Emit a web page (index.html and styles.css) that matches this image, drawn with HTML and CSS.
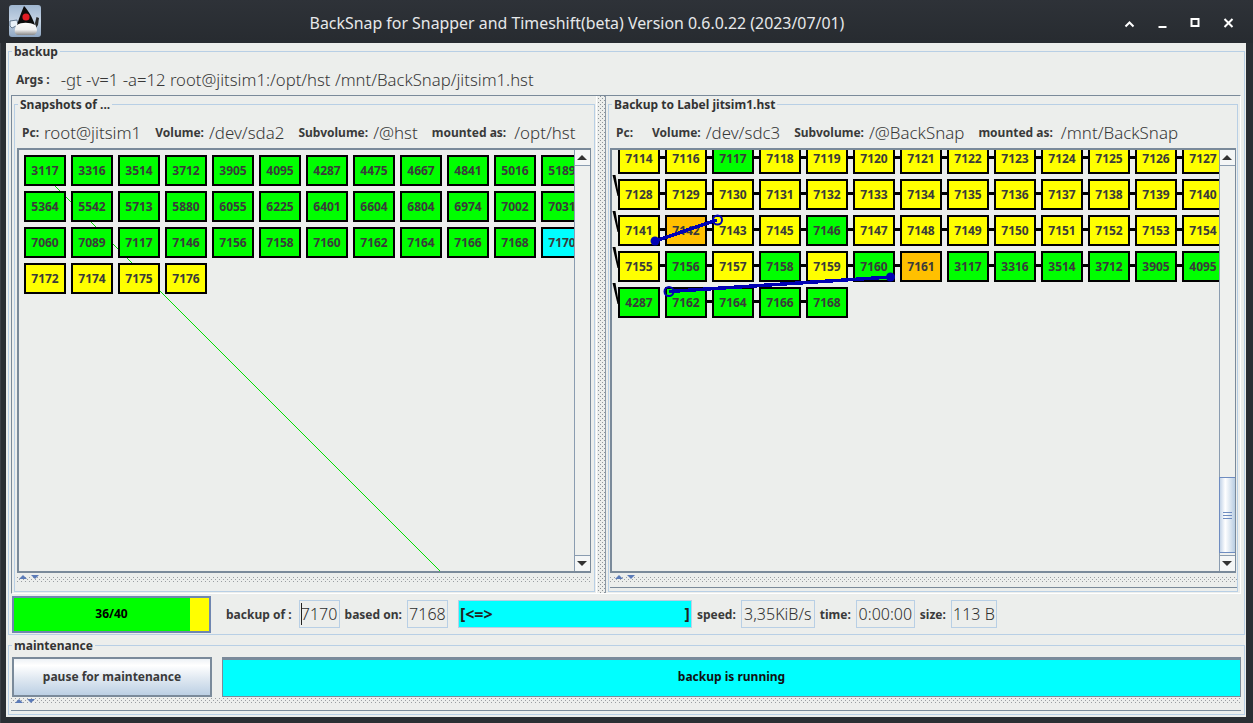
FILE: index.html
```html
<!DOCTYPE html>
<html lang="en">
<head>
<meta charset="utf-8">
<title>BackSnap</title>
<link rel="stylesheet" href="styles.css">
</head>
<body>
<div class="window">
  <header class="titlebar">
    <svg class="appicon" viewBox="0 0 32 32" width="32" height="32">
      <defs>
        <linearGradient id="iconbg" x1="0" y1="0" x2="0" y2="1">
          <stop offset="0" stop-color="#9fb6d0"/><stop offset="0.5" stop-color="#c4d3e4"/><stop offset="1" stop-color="#8ea6c2"/>
        </linearGradient>
        <linearGradient id="belly" x1="0" y1="0" x2="0" y2="1">
          <stop offset="0" stop-color="#ffffff"/><stop offset="0.65" stop-color="#f0f0f0"/><stop offset="1" stop-color="#8a8a8a"/>
        </linearGradient>
      </defs>
      <rect x="0" y="0" width="32" height="32" rx="3" fill="url(#iconbg)"/>
      <path d="M1 16 L8 15 L9 20 L3 23 L1 21 Z" fill="#e8f0f8" stroke="#4a6078" stroke-width="0.8"/>
      <path d="M26 18 L27.500 12 L30 13 L29 20 L27 23 Z" fill="#2a2a2a"/>
      <path d="M6 24 C7 18 11 15 16 15 C22 15 27 18 28 25 C28 28 26 30 24 30 L10 30 C7 30 5 28 6 24 Z" fill="url(#belly)"/>
      <path d="M15 1 C18 4 23 11 26 20 C21 17 12 17 8 20 C10 13 13 6 15 1 Z" fill="#0c0c0c"/>
      <circle cx="17" cy="12" r="3.600" fill="#e01c24"/>
    </svg>
    <h1 class="title">BackSnap for Snapper and Timeshift(beta) Version 0.6.0.22 (2023/07/01)</h1>
    <div class="controls">
      <svg class="ctl" viewBox="0 0 33 20" width="33" height="20"><path d="M12.500 13.500 L16.500 9.500 L20.500 13.500" /></svg>
      <svg class="ctl" viewBox="0 0 33 20" width="33" height="20"><path d="M12.500 14 H20.500" /></svg>
      <svg class="ctl" viewBox="0 0 33 20" width="33" height="20"><rect x="12.500" y="6" width="7" height="7" /></svg>
      <svg class="ctl" viewBox="0 0 33 20" width="33" height="20"><path d="M12.500 6 L20.500 14 M20.500 6 L12.500 14" /></svg>
    </div>
  </header>

  <main class="content">
    <section class="group group-backup">
      <span class="legend">backup</span>
      <div class="args">
        <span class="lbl lbl-args">Args :</span>
        <span class="val val-args">-gt -v=1 -a=12 root@jitsim1:/opt/hst /mnt/BackSnap/jitsim1.hst</span>
      </div>

      <div class="split">
        <div class="pane pane-left">
          <section class="group inner inner-left">
            <span class="legend">Snapshots of ...</span>
            <div class="info info-left">
              <span class="lbl">Pc:</span><span class="val">root@jitsim1</span>
              <span class="lbl sep">Volume:</span><span class="val">/dev/sda2</span>
              <span class="lbl sep">Subvolume:</span><span class="val">/@hst</span>
              <span class="lbl sep">mounted as:</span><span class="val">/opt/hst</span>
            </div>
            <div class="scrollpane">
              <div class="viewport">
                <svg class="overlay" width="555" height="421" viewBox="0 0 555 421"><line class="diag" x1="36" y1="36" x2="421" y2="421"/></svg>
                <div class="nodes nodes-left">
                  <div class="node g">3117</div><div class="node g">3316</div><div class="node g">3514</div><div class="node g">3712</div><div class="node g">3905</div><div class="node g">4095</div><div class="node g">4287</div><div class="node g">4475</div><div class="node g">4667</div><div class="node g">4841</div><div class="node g">5016</div><div class="node g">5189</div>
                  <div class="node g">5364</div><div class="node g">5542</div><div class="node g">5713</div><div class="node g">5880</div><div class="node g">6055</div><div class="node g">6225</div><div class="node g">6401</div><div class="node g">6604</div><div class="node g">6804</div><div class="node g">6974</div><div class="node g">7002</div><div class="node g">7031</div>
                  <div class="node g">7060</div><div class="node g">7089</div><div class="node g">7117</div><div class="node g">7146</div><div class="node g">7156</div><div class="node g">7158</div><div class="node g">7160</div><div class="node g">7162</div><div class="node g">7164</div><div class="node g">7166</div><div class="node g">7168</div><div class="node c">7170</div>
                  <div class="node y">7172</div><div class="node y">7174</div><div class="node y">7175</div><div class="node y">7176</div>
                </div>
              </div>
              <div class="scrollbar">
                <div class="sb-btn"><i class="tri-up"></i></div>
                <div class="sb-track"></div>
                <div class="sb-btn sb-down"><i class="tri-down"></i></div>
              </div>
            </div>
            <div class="touch"><div class="arrows"><i class="a-up"></i><i class="a-down"></i></div></div>
          </section>
        </div>

        <div class="divider"></div>

        <div class="pane pane-right">
          <section class="group inner inner-right">
            <span class="legend">Backup to Label jitsim1.hst</span>
            <div class="info info-right">
              <span class="lbl">Pc:</span><span class="val"></span>
              <span class="lbl sep">Volume:</span><span class="val">/dev/sdc3</span>
              <span class="lbl sep">Subvolume:</span><span class="val">/@BackSnap</span>
              <span class="lbl sep">mounted as:</span><span class="val">/mnt/BackSnap</span>
            </div>
            <div class="scrollpane">
              <div class="viewport">
                <div class="nodes nodes-right">
                  <div class="node y l">7114</div><div class="node y l">7116</div><div class="node g l">7117</div><div class="node y l">7118</div><div class="node y l">7119</div><div class="node y l">7120</div><div class="node y l">7121</div><div class="node y l">7122</div><div class="node y l">7123</div><div class="node y l">7124</div><div class="node y l">7125</div><div class="node y l">7126</div><div class="node y">7127</div>
                  <div class="node y l">7128</div><div class="node y l">7129</div><div class="node y l">7130</div><div class="node y l">7131</div><div class="node y l">7132</div><div class="node y l">7133</div><div class="node y l">7134</div><div class="node y l">7135</div><div class="node y l">7136</div><div class="node y l">7137</div><div class="node y l">7138</div><div class="node y l">7139</div><div class="node y">7140</div>
                  <div class="node y l">7141</div><div class="node o l">7142</div><div class="node y l">7143</div><div class="node y l">7145</div><div class="node g l">7146</div><div class="node y l">7147</div><div class="node y l">7148</div><div class="node y l">7149</div><div class="node y l">7150</div><div class="node y l">7151</div><div class="node y l">7152</div><div class="node y l">7153</div><div class="node y">7154</div>
                  <div class="node y l">7155</div><div class="node g l">7156</div><div class="node y l">7157</div><div class="node g l">7158</div><div class="node y l">7159</div><div class="node g l">7160</div><div class="node o">7161</div><div class="node g l">3117</div><div class="node g l">3316</div><div class="node g l">3514</div><div class="node g l">3712</div><div class="node g l">3905</div><div class="node g">4095</div>
                  <div class="node g">4287</div><div class="node g l">7162</div><div class="node g l">7164</div><div class="node g l">7166</div><div class="node g">7168</div>
                </div>
                <svg class="overlay" width="607" height="421" viewBox="0 0 607 421">
                  <path class="wedge" d="M0.500 25 L3.500 25 L7 46 L5.500 46 Z M0.500 61 L3.500 61 L7 82 L5.500 82 Z M0.500 97 L3.500 97 L7 118 L5.500 118 Z M0.500 133 L3.500 133 L7 154 L5.500 154 Z"/>
                  <line class="ref" x1="43" y1="91" x2="105" y2="70"/>
                  <circle class="ref-end" cx="43" cy="91" r="4.500"/>
                  <circle class="ref-start" cx="105.500" cy="70" r="4.500"/>
                  <line class="ref" x1="278.500" y1="127" x2="57" y2="141.500"/>
                  <circle class="ref-end" cx="278.500" cy="127" r="4.500"/>
                  <circle class="ref-start" cx="57" cy="141.500" r="4.500"/>
                </svg>
              </div>
              <div class="scrollbar">
                <div class="sb-btn"><i class="tri-up"></i></div>
                <div class="sb-track sb-track-top"></div>
                <div class="sb-thumb"><i></i><i></i><i></i></div>
                <div class="sb-gap"></div>
                <div class="sb-btn sb-down"><i class="tri-down"></i></div>
              </div>
            </div>
            <div class="touch touch-ruled"><div class="arrows"><i class="a-up"></i><i class="a-down"></i></div></div>
          </section>
        </div>
      </div>

      <div class="status">
        <div class="progress">
          <div class="progress-done"></div>
          <div class="progress-rest"></div>
          <span class="progress-text">36/40</span>
        </div>
        <span class="lbl lbl-first">backup of :</span>
        <span class="field field-a"><i class="caret"></i>7170</span>
        <span class="lbl">based on:</span>
        <span class="field field-b">7168</span>
        <div class="bar"><span>[&lt;=&gt;</span><span>]</span></div>
        <span class="lbl">speed:</span>
        <span class="field field-c">3,35KiB/s</span>
        <span class="lbl">time:</span>
        <span class="field field-d">0:00:00</span>
        <span class="lbl">size:</span>
        <span class="field field-e">113 B</span>
      </div>
    </section>

    <section class="group group-maint">
      <span class="legend">maintenance</span>
      <div class="maint-row">
        <button class="pause">pause for maintenance</button>
        <div class="running">backup is running</div>
      </div>
      <div class="touch touch-ruled touch-maint"><div class="arrows"><i class="a-up"></i><i class="a-down"></i></div></div>
    </section>
  </main>
</div>
</body>
</html>
```
FILE: styles.css
```css
* { box-sizing: border-box; }
html, body { margin: 0; padding: 0; }
body {
  width: 1253px;
  height: 723px;
  overflow: hidden;
  background: #4a3f48;
  font-family: "Noto Sans", "Liberation Sans", sans-serif;
  color: #333;
}
.window {
  width: 1253px;
  height: 723px;
  display: flex;
  flex-direction: column;
  padding: 0 7px 6px 6px;
  background: #2a2e33;
  border-radius: 6px 6px 0 0;
  box-shadow: inset 1px 1px 0 #3c4046;
}

/* title bar */
.titlebar {
  height: 43px;
  flex: none;
  display: flex;
  align-items: flex-start;
  margin: 0 -7px 0 -6px;
  padding: 5px 8px 0 9px;
  background: linear-gradient(#2e3238, #272b30);
}
.appicon { flex: none; }
.title {
  flex: 1;
  margin: 0;
  text-align: center;
  font-size: 15.9px;
  font-weight: 400;
  line-height: 36px;
  color: #e6e8ea;
}
.controls { display: flex; flex: none; margin-top: 8px; }
.ctl { display: block; }
.ctl path, .ctl rect { fill: none; stroke: #fff; stroke-width: 2; }

/* main */
.content {
  flex: 1;
  background: #eceeec;
  padding: 8px 1px 0 2px;
  display: flex;
  flex-direction: column;
}
.group {
  position: relative;
  border: 1px solid #b8cfe5;
}
.legend {
  position: absolute;
  top: -8px;
  left: 3px;
  padding: 0 2px 0 2px;
  background: #eceeec;
  font-size: 12px;
  font-weight: 700;
  line-height: 15px;
  color: #333;
  white-space: nowrap;
}
.lbl {
  font-size: 12px;
  font-weight: 700;
  color: #3a3a3a;
  white-space: nowrap;
}
.val {
  font-size: 16.9px;
  font-weight: 300;
  color: #383838;
  white-space: nowrap;
}
.val-args { font-size: 16.7px; }

.group-backup { height: 584px; flex: none; }
.args {
  height: 43px;
  padding: 19px 0 8px 7px;
  display: flex;
  align-items: center;
  gap: 11px;
}

/* split pane */
.split {
  height: 499px;
  margin: 0 3px 0 2px;
  display: flex;
  border-style: solid;
  border-width: 1px;
  border-color: #7a8a9a #fff #fff #7a8a9a;
}
.pane { height: 100%; padding-top: 8px; }
.pane-left { width: 584px; padding-left: 2px; padding-right: 1px; }
.pane-right { width: 635px; padding-left: 2px; border-left: 1px solid #8a98a6; padding-right: 2px; }
.divider {
  width: 9px;
  border-left: 1px solid #fff;
  background-image:
    radial-gradient(circle at 0.5px 0.5px, #8f959a 0.7px, transparent 0.8px),
    radial-gradient(circle at 0.5px 0.5px, #8f959a 0.7px, transparent 0.8px);
  background-size: 4px 4px;
  background-position: 3px 0, 5px 2px;
  background-repeat: repeat;
  background-clip: padding-box;
}
.inner { height: 488px; }
.info {
  height: 43px;
  display: flex;
  align-items: center;
  padding-top: 13px;
  padding-bottom: 1px;
  gap: 5px;
}
.info-left { padding-left: 7px; }
.info-right { padding-left: 7px; }
.sep { margin-left: 9px; }
.info .val:last-child { margin-left: 3px; }
.info-right .sep { margin-left: 9px; }

/* scroll pane */
.scrollpane {
  height: 425px;
  display: flex;
  border-style: solid;
  border-color: #7a8a9a;
  border-width: 2px 1px 2px 2px;
}
.inner-left .scrollpane { width: 574px; margin-left: 2px; }
.inner-right .scrollpane { width: 626px; margin-left: 1px; }
.viewport {
  position: relative;
  flex: 1;
  overflow: hidden;
  height: 421px;
}
.overlay { position: absolute; left: 0; top: 0; pointer-events: none; }
.diag { stroke: #00e000; stroke-width: 1; }
.wedge { fill: #000; }
.ref { stroke: #0000b4; stroke-width: 3.5; shape-rendering: crispEdges; }
.ref-end { fill: #0000b4; }
.ref-start { fill: none; stroke: #0000b4; stroke-width: 2; }

.nodes {
  position: relative;
  display: grid;
  grid-auto-rows: 31px;
  gap: 5px;
}
.nodes-left { grid-template-columns: repeat(12, 42px); padding: 5px 0 0 5px; }
.nodes-right { grid-template-columns: repeat(13, 42px); margin-top: -7px; padding-left: 6px; }
.node {
  position: relative;
  border: 2px solid #000;
  font-size: 12px;
  font-weight: 700;
  line-height: 27px;
  text-align: center;
  color: #3a3a3a;
}
.g { background: #00ff00; }
.y { background: #ffff00; }
.o { background: #ffc000; }
.c { background: #00ffff; }
.l::after {
  content: "";
  position: absolute;
  left: calc(100% + 2px);
  top: 11px;
  width: 5px;
  height: 3px;
  background: #000;
}

/* scrollbar */
.scrollbar {
  width: 16px;
  flex: none;
  display: flex;
  flex-direction: column;
  background: #eceeec;
  border-left: 1px solid #8a9cb0;
}
.sb-btn {
  height: 16px;
  flex: none;
  display: flex;
  align-items: center;
  justify-content: center;
  padding-right: 2px;
  background: #f4f6f6;
  border-bottom: 1px solid #8a9cb0;
}
.sb-down { border-bottom: 0; border-top: 1px solid #8a9cb0; }
.sb-track { flex: 1; background: #eef0ee; }
.sb-thumb {
  height: 76px;
  flex: none;
  display: flex;
  flex-direction: column;
  align-items: center;
  justify-content: center;
  gap: 2px;
  margin-left: -1px;
  background: linear-gradient(90deg, #c4d4e8, #fff 35%, #e4ecf4 60%, #b8cde2);
  border-top: 1px solid #6e8cc0;
  border-bottom: 1px solid #6e8cc0;
  border-left: 1px solid #6e8cc0;
}
.sb-thumb i { display: block; width: 9px; height: 1px; background: #6e8cc0; }
.sb-gap { height: 2px; flex: none; background: #eef0ee; }
.tri-up, .tri-down { width: 0; height: 0; border-left: 5px solid transparent; border-right: 5px solid transparent; }
.tri-up { border-bottom: 5px solid #333; }
.tri-down { border-top: 5px solid #333; }

/* one touch bar */
.touch {
  position: relative;
  height: 10px;
  margin: 4px 3px 0 2px;
  background-image:
    linear-gradient(transparent 6px, #eceeec 6px),
    radial-gradient(circle at 0.5px 0.5px, #9a9ea2 0.7px, transparent 0.8px),
    radial-gradient(circle at 0.5px 0.5px, #9a9ea2 0.7px, transparent 0.8px);
  background-size: 100% 100%, 4px 4px, 4px 4px;
  background-position: 0 0, 0 0, 2px 2px;
  background-repeat: no-repeat, repeat, repeat;
}
.touch-ruled { border-bottom: 1px solid #7a8a9a; margin-right: 0; margin-left: 1px; height: 11px; }
.arrows {
  position: absolute;
  left: 2px;
  top: -2px;
  display: flex;
  gap: 4px;
}
.touch-ruled .arrows { left: 5px; }
.a-up, .a-down { width: 0; height: 0; border-left: 4px solid transparent; border-right: 4px solid transparent; }
.a-up { border-bottom: 4px solid #5b7bb8; }
.a-down { border-top: 4px solid #5b7bb8; }

/* status row */
.status {
  height: 40px;
  display: flex;
  align-items: center;
  padding-left: 3px;
  gap: 5px;
}
.progress {
  position: relative;
  width: 199px;
  height: 37px;
  display: flex;
  border: 2px solid #6f86b0;
  margin-right: 10px;
}
.progress-done { width: 176px; background: #00ff00; }
.progress-rest { flex: 1; background: #ffff00; }
.progress-text {
  position: absolute;
  left: 0;
  right: 0;
  top: 7px;
  text-align: center;
  font-size: 12px;
  font-weight: 700;
  color: #000;
}
.lbl-first { margin-right: 2px; }
.field {
  position: relative;
  height: 28px;
  border: 1px solid #b8cfe5;
  font-size: 16px;
  font-weight: 300;
  line-height: 26px;
  color: #2e2e2e;
  text-align: center;
  white-space: nowrap;
}
.field-a { width: 41px; }
.field-b { width: 41px; margin-right: 5px; }
.field-c { width: 74px; }
.field-d { width: 59px; }
.field-e { width: 46px; }
.caret {
  position: absolute;
  left: 1px;
  top: 2px;
  width: 1px;
  height: 22px;
  background: #222;
}
.bar {
  width: 234px;
  height: 28px;
  display: flex;
  justify-content: space-between;
  align-items: center;
  padding: 0 1px;
  border: 1px solid #b8cfe5;
  background: #00ffff;
  font-size: 16px;
  font-weight: 700;
  color: #222;
}

/* maintenance */
.group-maint { height: 70px; flex: none; margin-top: 10px; }
.maint-row {
  height: 40px;
  margin-top: 11px;
  padding-left: 3px;
  padding-right: 3px;
  display: flex;
  gap: 10px;
}
.pause {
  width: 200px;
  height: 40px;
  padding: 0 0 2px;
  border: 2px solid #7a8a9a;
  border-radius: 0;
  background: linear-gradient(#eef2f6, #fff 18%, #dfe8f1 55%, #bcd0e4);
  font: 700 12px "Noto Sans", "Liberation Sans", sans-serif;
  color: #3a3a3a;
}
.running {
  flex: 1;
  height: 40px;
  padding-bottom: 3px;
  border: 1px solid #7a8a9a;
  border-top-width: 3px;
  background: #00ffff;
  display: flex;
  align-items: center;
  justify-content: center;
  font-size: 12px;
  font-weight: 700;
  color: #111;
}
.touch-maint { margin: 1px 3px 0 2px; height: 13px; }
.touch-maint .arrows { left: 4px; top: 1px; }
```
